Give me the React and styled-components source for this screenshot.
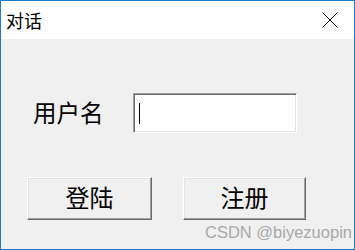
import React from "react";
import styled, { createGlobalStyle } from "styled-components";

const Global = createGlobalStyle`
  html, body { margin: 0; padding: 0; background: #ffffff; }
  body { font-family: "Noto Sans CJK SC", "Noto Sans", sans-serif; }
`;

const Frame = styled.div`
  position: relative;
  width: 355px;
  height: 250px;
  box-sizing: border-box;
  border: 1px solid #1a7ccc;
  display: flex;
  flex-direction: column;
  overflow: hidden;
`;

const TitleBar = styled.div`
  height: 38px;
  flex: none;
  background: #ffffff;
  display: flex;
  align-items: center;
  justify-content: space-between;
  padding-left: 5px;
  padding-right: 16px;
`;

const Title = styled.span`
  font-size: 18px;
  color: #000;
  line-height: 1;
`;

const CloseButton = styled.div`
  width: 16px;
  height: 16px;
  display: flex;
`;

const Client = styled.div`
  flex: 1;
  background: #f0f0f0;
  display: flex;
  flex-direction: column;
  padding-top: 54px;
`;

const FieldRow = styled.div`
  display: flex;
  align-items: center;
  padding-left: 32px;
  gap: 29px;
`;

const Label = styled.span`
  font-size: 23.5px;
  line-height: 1;
  color: #000;
`;

const TextBox = styled.div`
  position: relative;
  width: 164px;
  height: 40px;
  box-sizing: border-box;
  background: #ffffff;
  border-top: 1px solid #a0a0a0;
  border-left: 1px solid #a0a0a0;
  border-right: 1px solid #ffffff;
  border-bottom: 1px solid #ffffff;
  box-shadow: inset 1px 1px 0 #696969, inset -1px -1px 0 #e3e3e3;
  display: flex;
  align-items: center;
  padding-left: 5px;
`;

const Caret = styled.div`
  width: 1px;
  height: 21px;
  background: #000;
`;

const ButtonRow = styled.div`
  display: flex;
  padding-left: 26px;
  gap: 31px;
  margin-top: 44px;
`;

const Button = styled.div`
  width: ${(p) => p.$w}px;
  height: 43px;
  box-sizing: border-box;
  background: #f0f0f0;
  border-top: 1px solid #ffffff;
  border-left: 1px solid #ffffff;
  border-right: 1px solid #696969;
  border-bottom: 1px solid #696969;
  box-shadow: inset -1px -1px 0 #a0a0a0, inset 1px 1px 0 #e3e3e3;
  display: flex;
  align-items: center;
  justify-content: center;
  padding-bottom: 4px;
  font-size: 24px;
  line-height: 1;
  color: #000;
`;

const Watermark = styled.span`
  position: absolute;
  right: 2px;
  bottom: 7px;
  font-family: "Liberation Sans", Arial, sans-serif;
  font-size: 16.5px;
  color: #a8a8a8;
`;

export default function App() {
  return (
    <>
      <Global />
      <Frame>
        <TitleBar>
          <Title>对话</Title>
          <CloseButton>
            <svg width="16" height="16" viewBox="0 0 16 16">
              <path d="M0.5 0.5 L15.5 15.5 M15.5 0.5 L0.5 15.5" stroke="#000" strokeWidth="1" fill="none" />
            </svg>
          </CloseButton>
        </TitleBar>
        <Client>
          <FieldRow>
            <Label>用户名</Label>
            <TextBox>
              <Caret />
            </TextBox>
          </FieldRow>
          <ButtonRow>
            <Button $w={125}>登陆</Button>
            <Button $w={123}>注册</Button>
          </ButtonRow>
        </Client>
        <Watermark>CSDN @biyezuopin</Watermark>
      </Frame>
    </>
  );
}
